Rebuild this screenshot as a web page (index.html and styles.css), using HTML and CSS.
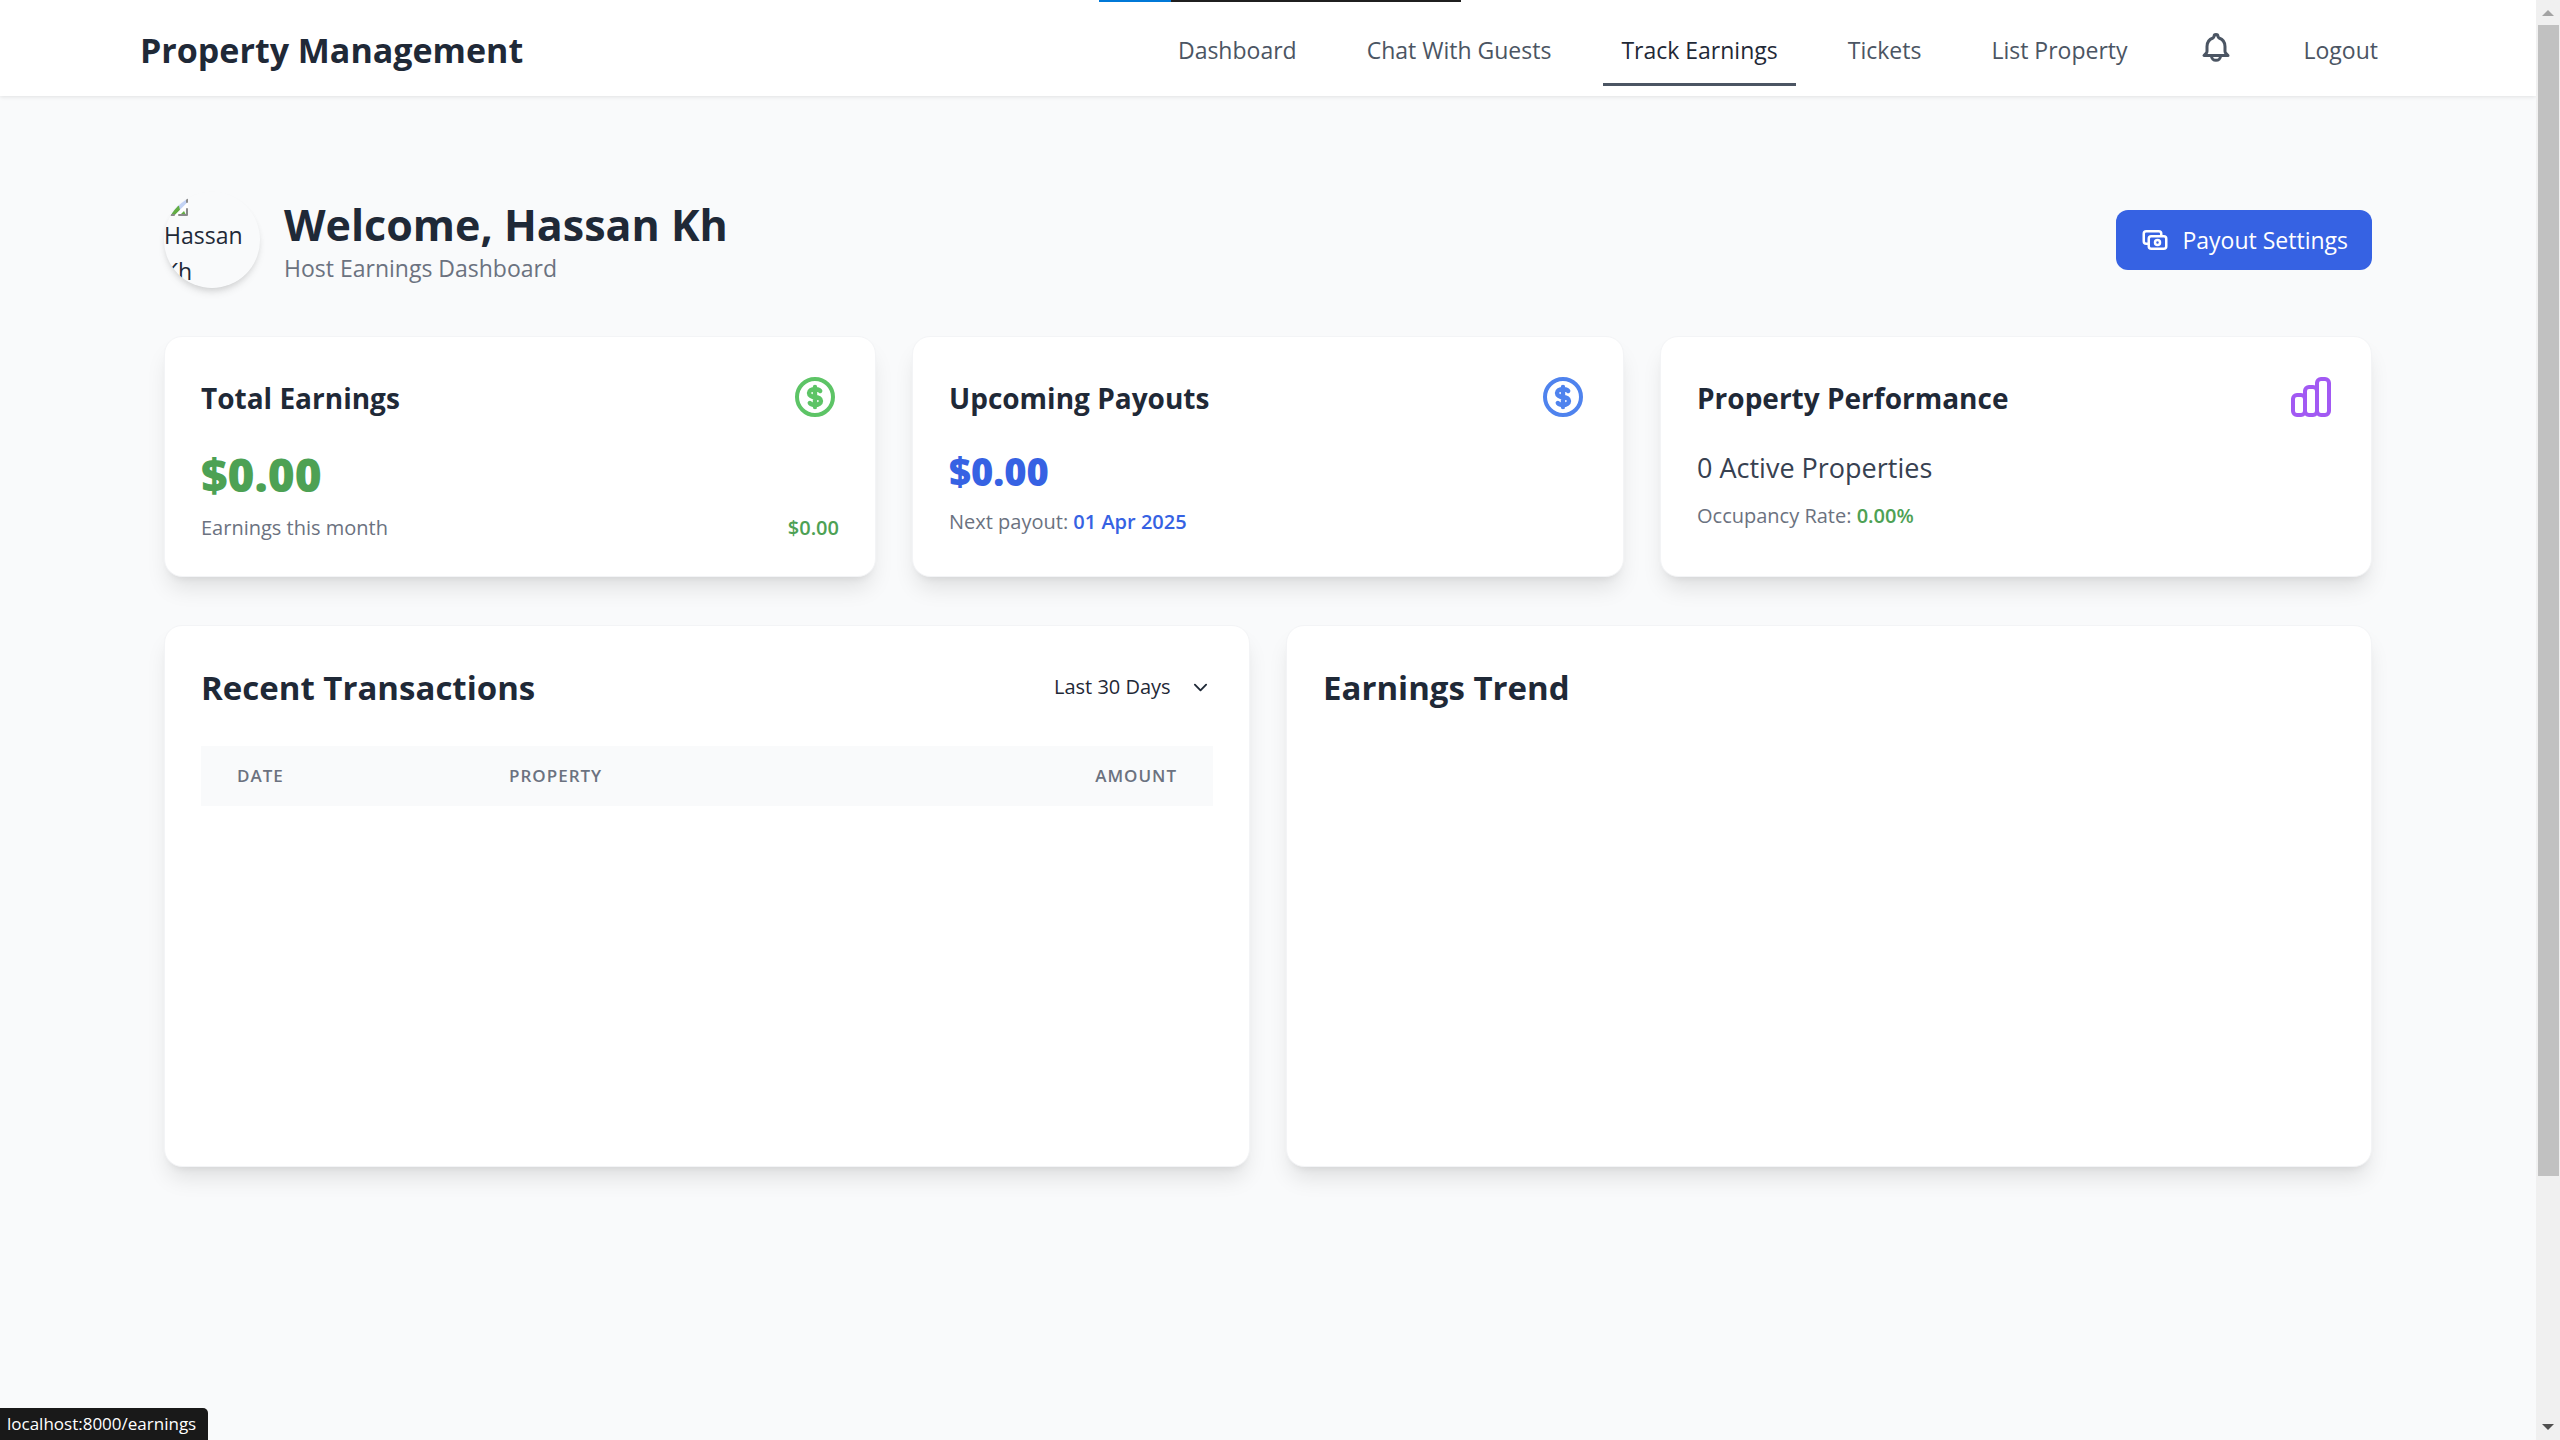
FILE: index.html
```html
<!DOCTYPE html>
<html lang="en">
<head>
<meta charset="utf-8">
<title>Property Management - Track Earnings</title>
<link rel="stylesheet" href="styles.css">
</head>
<body>
<div class="viewport">
  <div class="page">
    <header class="topbar">
      <div class="topbar-inner">
        <a class="brand" href="#">Property Management</a>
        <nav class="nav" aria-label="Main">
          <a class="nav-link" href="#">Dashboard</a>
          <a class="nav-link" href="#">Chat With Guests</a>
          <a class="nav-link active" href="#">Track Earnings</a>
          <a class="nav-link" href="#">Tickets</a>
          <a class="nav-link" href="#">List Property</a>
          <button class="bell" type="button" aria-label="Notifications">
            <svg viewBox="0 0 24 24"><path d="M4 17h16l-1.400-1.400A2 2 0 0118 14.200V11a6 6 0 00-4-5.660Q13.500 5.100 13.300 4.300a1.300 1.300 0 00-2.600 0Q10.500 5.100 10 5.340C7.670 6.170 6 8.390 6 11v3.200c0 .5-.2 1-.6 1.400zM9 17.500a3 2.700 0 006 0"/></svg>
          </button>
          <a class="nav-link" href="#">Logout</a>
        </nav>
      </div>
    </header>

    <main class="content">
      <section class="welcome">
        <div class="avatar" role="img" aria-label="Hassan Kh">
          <svg class="broken" viewBox="0 0 24 24"><path fill="#c3d3f5" d="M2 2h14l7 6v3L11 23H2z"/><path fill="#63ad43" d="M2 23v-4l9-8 4 3 1 4-5 5z"/><path fill="#fff" d="M24 10 10 24h5l9-8z"/><path fill="#63ad43" d="m16 23 4-4 2 4z"/><path fill="none" stroke="#8b8b8b" stroke-width="2" d="M5 23h5m5 0h8v-6m0-7V7"/></svg>
          <span class="avatar-text">Hassan Kh</span>
        </div>
        <div class="welcome-text">
          <h1>Welcome, Hassan Kh</h1>
          <p>Host Earnings Dashboard</p>
        </div>
        <button class="payout-btn" type="button">
          <svg viewBox="0 0 24 24"><path d="M17 9V7a2 2 0 00-2-2H5a2 2 0 00-2 2v6a2 2 0 002 2h2m2 4h10a2 2 0 002-2v-6a2 2 0 00-2-2H9a2 2 0 00-2 2v6a2 2 0 002 2zm7-5a2 2 0 11-4 0 2 2 0 014 0z"/></svg>
          Payout Settings
        </button>
      </section>

      <section class="stats">
        <article class="card">
          <div class="card-head">
            <h2>Total Earnings</h2>
            <svg class="icon green-icon" viewBox="0 0 24 24"><path d="M21 12a9 9 0 11-18 0 9 9 0 0118 0z"/><path class="sign" d="M12 8c-1.657 0-3 .895-3 2s1.343 2 3 2 3 .895 3 2-1.343 2-3 2m0-8c1.11 0 2.08.402 2.599 1M12 8V7m0 1v8m0 0v1m0-1c-1.11 0-2.08-.402-2.599-1"/></svg>
          </div>
          <p class="amount-lg green">$0.00</p>
          <div class="row note"><span>Earnings this month</span><strong class="green">$0.00</strong></div>
        </article>
        <article class="card">
          <div class="card-head">
            <h2>Upcoming Payouts</h2>
            <svg class="icon blue-icon" viewBox="0 0 24 24"><path d="M21 12a9 9 0 11-18 0 9 9 0 0118 0z"/><path class="sign" d="M12 8c-1.657 0-3 .895-3 2s1.343 2 3 2 3 .895 3 2-1.343 2-3 2m0-8c1.11 0 2.08.402 2.599 1M12 8V7m0 1v8m0 0v1m0-1c-1.11 0-2.08-.402-2.599-1"/></svg>
          </div>
          <p class="amount-md blue">$0.00</p>
          <p class="note">Next payout: <strong class="blue">01 Apr 2025</strong></p>
        </article>
        <article class="card">
          <div class="card-head">
            <h2>Property Performance</h2>
            <svg class="icon purple-icon" viewBox="0 0 24 24"><path d="M9 19v-6a2 2 0 00-2-2H5a2 2 0 00-2 2v6a2 2 0 002 2h2a2 2 0 002-2zm0 0V9a2 2 0 012-2h2a2 2 0 012 2v10m-6 0a2 2 0 002 2h2a2 2 0 002-2m0 0V5a2 2 0 012-2h2a2 2 0 012 2v14a2 2 0 01-2 2h-2a2 2 0 01-2-2z"/></svg>
          </div>
          <p class="active-count">0 Active Properties</p>
          <p class="note">Occupancy Rate: <strong class="green">0.00%</strong></p>
        </article>
      </section>

      <section class="panels">
        <article class="card panel">
          <div class="panel-head">
            <h2>Recent Transactions</h2>
            <div class="period">
              <select aria-label="Period"><option>Last 30 Days</option><option>Last 90 Days</option></select>
              <svg viewBox="0 0 16 16"><path d="m2 5 6 6 6-6"/></svg>
            </div>
          </div>
          <table>
            <thead><tr><th class="c-date">Date</th><th class="c-prop">Property</th><th class="c-amount">Amount</th></tr></thead>
            <tbody></tbody>
          </table>
        </article>
        <article class="card panel">
          <div class="panel-head"><h2>Earnings Trend</h2></div>
        </article>
      </section>
    </main>
  </div>

  <div class="scrollbar" aria-hidden="true">
    <svg class="up" viewBox="0 0 12 6"><path d="M0 6 6 0l6 6z"/></svg>
    <div class="track"><div class="thumb"></div></div>
    <svg class="down" viewBox="0 0 12 6"><path d="M0 0h12L6 6z"/></svg>
  </div>
</div>
<div class="top-strip" aria-hidden="true"></div>
<div class="status">localhost:8000/earnings</div>
</body>
</html>
```
FILE: styles.css
```css
* { box-sizing: border-box; margin: 0; padding: 0; }
body {
  font-family: "Open Sans", "Noto Sans", sans-serif;
  font-size: 23px;
  line-height: 36px;
  color: #1f2937;
  background: #f9fafb;
}
a { color: inherit; text-decoration: none; }
button, select { font: inherit; border: 0; background: none; color: inherit; }
svg { fill: none; stroke: currentColor; stroke-width: 2; stroke-linecap: round; stroke-linejoin: round; flex: none; }

.viewport { display: flex; height: 100vh; overflow: hidden; }
.page { flex: 1; min-width: 0; }

.topbar { background: #fff; box-shadow: 0 1px 4px rgba(0, 0, 0, 0.1); }
.topbar-inner {
  display: flex;
  align-items: center;
  justify-content: space-between;
  height: 96px;
  padding: 0 140px;
}
.brand { font-size: 34px; line-height: 48px; font-weight: 700; padding-top: 4px; }
.nav { display: flex; align-items: center; gap: 34px; color: #4b5563; }
.nav-link { padding: 24px 18px 0; height: 76px; line-height: 32px; white-space: nowrap; }
.nav-link.active { color: #1f2937; border-bottom: 3px solid #4b5563; }
.bell { padding: 0 18px; height: 36px; color: #4b5563; }
.bell svg { width: 36px; height: 36px; display: block; }

.content { padding: 96px 164px 0; }

.welcome { display: flex; align-items: center; gap: 24px; height: 96px; }
.avatar {
  width: 96px;
  height: 96px;
  border-radius: 50%;
  overflow: hidden;
  line-height: 36px;
  box-shadow: 0 6px 9px -2px rgba(0, 0, 0, 0.1), 0 3px 6px -2px rgba(0, 0, 0, 0.1);
}
.broken { display: block; width: 24px; height: 24px; stroke: none; }
.avatar-text { display: block; margin-top: 1px; }
.welcome-text { flex: 1; padding-top: 2px; }
.welcome-text h1 { font-size: 43px; line-height: 54px; font-weight: 700; }
.welcome-text p { color: #6b7280; line-height: 32px; }
.payout-btn {
  display: flex;
  align-items: center;
  gap: 12px;
  height: 60px;
  padding: 0 24px;
  border-radius: 12px;
  background: #3662e3;
  color: #fff;
}
.payout-btn svg { width: 30px; height: 30px; }

.card {
  background: #fff;
  border: 1px solid #f3f4f6;
  border-radius: 18px;
  padding: 36px 36px 32px;
  box-shadow: 0 15px 22px -4px rgba(0, 0, 0, 0.1), 0 6px 9px -6px rgba(0, 0, 0, 0.1);
}
.stats { display: grid; grid-template-columns: repeat(3, 1fr); gap: 36px; margin-top: 48px; }
.stats .card { min-height: 241px; }
.card-head { display: flex; justify-content: space-between; align-items: center; height: 48px; margin-bottom: 26px; }
.card-head h2 { font-size: 28px; font-weight: 700; padding-top: 2px; }
.icon { width: 48px; height: 48px; }
.sign { stroke-width: 2.2; }
.green-icon { color: #5dc466; }
.blue-icon { color: #4f83ee; }
.purple-icon { color: #a259f3; }
.green { color: #4da154; }
.blue { color: #3662e3; }
.amount-lg { font-size: 46px; line-height: 54px; font-weight: 800; }
.amount-md { font-size: 38px; line-height: 48px; font-weight: 800; }
.active-count { font-size: 27px; line-height: 42px; font-weight: 500; color: #374151; }
.note { font-size: 20px; line-height: 30px; color: #6b7280; margin-top: 12px; }
.note strong { font-weight: 600; }
.row { display: flex; justify-content: space-between; }

.panels { display: grid; grid-template-columns: repeat(2, 1fr); gap: 36px; margin-top: 48px; }
.panel { min-height: 542px; }
.panel-head { display: flex; align-items: center; justify-content: space-between; height: 50px; margin-bottom: 34px; }
.panel-head h2 { font-size: 33px; font-weight: 700; padding-top: 2px; }
.period { display: flex; align-items: center; gap: 22px; font-size: 20px; padding-right: 5px; }
.period select { appearance: none; }
.period svg { width: 15px; height: 15px; }
table { width: 100%; border-collapse: collapse; background: #f9fafb; table-layout: fixed; }
th {
  height: 60px;
  padding: 0 36px;
  text-align: left;
  text-transform: uppercase;
  font-size: 17px;
  line-height: 24px;
  letter-spacing: 1px;
  font-weight: 600;
  color: #6b7280;
}
.c-date { width: 272px; }
.c-amount { text-align: right; }

.scrollbar { width: 24px; background: #f0f0f0; display: flex; flex-direction: column; align-items: center; padding: 10px 0; }
.scrollbar svg { width: 12px; height: 6px; stroke: none; }
.up { fill: #a3a3a3; }
.down { fill: #505050; }
.track { flex: 1; align-self: stretch; padding: 9px 1px 0 2px; }
.thumb { height: 82.3%; background: #c1c1c1; }

.top-strip {
  position: absolute;
  top: 0;
  left: 1099px;
  width: 362px;
  height: 2px;
  background: linear-gradient(90deg, #0078d7 20%, #1f1f1f 20%);
}
.status {
  position: fixed;
  left: 0;
  bottom: 0;
  padding: 0 12px 0 7px;
  font-size: 17px;
  line-height: 32px;
  background: #191919;
  color: #fff;
  border-top-right-radius: 5px;
}
```
